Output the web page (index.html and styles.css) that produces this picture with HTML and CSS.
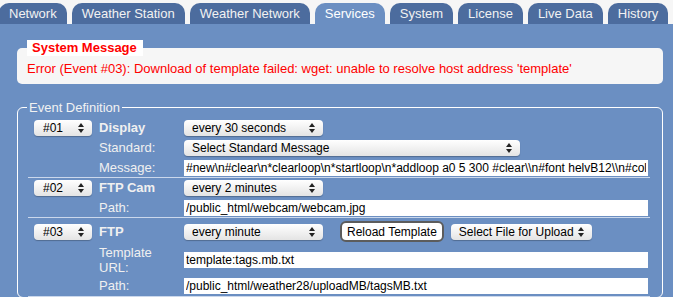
FILE: index.html
```html
<!DOCTYPE html>
<html>
    <head>
        <meta charset="utf-8">
        <link rel="stylesheet" href="styles.css">
    </head>
    <body>
        <ul class="tabs">
            <li>Network</li>
            <li>Weather Station</li>
            <li>Weather Network</li>
            <li class="active">Services</li>
            <li>System</li>
            <li>License</li>
            <li>Live Data</li>
            <li>History</li>
        </ul>

        <div class="panel">
            <fieldset class="sysmsg">
                <legend>System Message</legend>
                <p>Error (Event #03): Download of template failed: wget: unable to resolve host address 'template'</p>
            </fieldset>

            <fieldset class="events">
                <legend>Event Definition</legend>

                <div class="event">
                    <span class="sel num"><select><option>#01</option></select></span>
                    <b class="type">Display</b>
                    <span class="sel interval"><select><option>every 30 seconds</option></select></span>
                    <label>Standard:</label>
                    <span class="sel standard"><select><option>Select Standard Message</option></select></span>
                    <label>Message:</label>
                    <input class="field" value="#new\n#clear\n*clearloop\n*startloop\n*addloop a0 5 300 #clear\\n#font helvB12\\n#color 255 255 255\\n">
                </div>

                <div class="event">
                    <span class="sel num"><select><option>#02</option></select></span>
                    <b class="type">FTP Cam</b>
                    <span class="sel interval"><select><option>every 2 minutes</option></select></span>
                    <label>Path:</label>
                    <input class="field" value="/public_html/webcam/webcam.jpg">
                </div>

                <div class="event last">
                    <span class="sel num"><select><option>#03</option></select></span>
                    <b class="type">FTP</b>
                    <div class="actions">
                        <span class="sel interval"><select><option>every minute</option></select></span>
                        <button>Reload Template</button>
                        <span class="sel upload"><select><option>Select File for Upload</option></select></span>
                    </div>
                    <label class="two-line">Template<br>URL:</label>
                    <input class="field" value="template:tags.mb.txt">
                    <label>Path:</label>
                    <input class="field" value="/public_html/weather28/uploadMB/tagsMB.txt">
                </div>
            </fieldset>
        </div>
    </body>
</html>
```

FILE: styles.css
```css
body, html {
    margin: 0;
    padding: 0;
    height: 100%;
    background-color: #f6f6f6;
    font-family: 'Liberation Sans', Arial, sans-serif;
    overflow: hidden;
}

.tabs {
    display: flex;
    gap: 5px;
    list-style: none;
    margin: 0 0 0 -1px;
    padding: 3px 0 0;
    white-space: nowrap;
}

.tabs li {
    flex-shrink: 0;
    background-color: #4c6c9e;
    color: #f2f2f2;
    font-size: 13px;
    line-height: 21px;
    padding: 0 10px;
    border-radius: 10px 10px 0 0;
}

.tabs li.active {
    background-color: #6b8fc2;
    color: #fff;
}

.panel {
    background-color: #6b8fc2;
    height: 100%;
    padding-top: 16px;
}

fieldset {
    margin: 0 10px 0 17px;
    min-width: 0;
}

.sysmsg {
    border: none;
    background-color: #f6f6f6;
    border-radius: 5px;
    padding: 5px 6px 7px 10px;
}

.sysmsg legend {
    background-color: #fff;
    color: #f00;
    font-weight: bold;
    font-size: 13px;
    line-height: 16px;
    padding: 0 6px 0 5px;
}

.sysmsg p {
    margin: 0;
    color: #f00;
    font-size: 13px;
    line-height: 16px;
}

.events {
    margin-top: 16px;
    border: 1px solid #fff;
    border-radius: 6px;
    padding: 0 12px 0 10px;
}

.events legend {
    color: #f2f2f2;
    font-size: 13px;
    line-height: 15px;
    padding: 0 2px;
    margin-left: -1px;
}

.event {
    display: grid;
    grid-template-columns: 71px 85px 1fr;
    row-gap: 4px;
    align-items: center;
    padding: 5px 0 1px;
    border-bottom: 1px solid #cbd8ec;
    color: #f0f0f0;
    font-size: 13px;
}

.event + .event {
    padding-top: 2px;
}

.event.last {
    padding-top: 3px;
    row-gap: 3px;
    padding-bottom: 2px;
}

.event label {
    grid-column: 2;
    line-height: 16px;
}

.event .two-line {
    line-height: 15px;
}

.type {
    font-weight: bold;
    line-height: 16px;
}

.sel {
    display: inline-block;
    position: relative;
    height: 16px;
}

.sel select {
    appearance: none;
    -webkit-appearance: none;
    width: 100%;
    height: 16px;
    margin: 0;
    border: none;
    border-radius: 4px;
    padding: 0 0 0 8px;
    background: linear-gradient(#ffffff, #e4e4e4);
    box-shadow: 0 1px 1px rgba(0, 0, 0, 0.25);
    font-family: 'Liberation Sans', Arial, sans-serif;
    font-size: 12px;
    color: #000;
    display: block;
}

.sel::before,
.sel::after {
    content: '';
    position: absolute;
    right: 8px;
    border-left: 3px solid transparent;
    border-right: 3px solid transparent;
    pointer-events: none;
}

.sel::before {
    top: 3px;
    border-bottom: 4px solid #222;
}

.sel::after {
    top: 9px;
    border-top: 4px solid #222;
}

.num {
    width: 58px;
    margin-left: 6px;
}

.num select {
    padding-left: 9px;
}

.interval {
    width: 139px;
}

.standard {
    width: 336px;
}

.upload {
    width: 141px;
}

.field {
    width: 464px;
    height: 16px;
    box-sizing: border-box;
    border: none;
    margin: 0;
    padding: 0 2px;
    background: #fff;
    font-family: 'Liberation Sans', Arial, sans-serif;
    font-size: 12px;
    color: #000;
}

.actions {
    display: flex;
    align-items: center;
}

.actions button {
    height: 21px;
    margin: 0 7px 0 17px;
    padding: 0 5px;
    background: #fff;
    border: 2px solid #5c5c5c;
    border-radius: 6px;
    font-family: 'Liberation Sans', Arial, sans-serif;
    font-size: 12px;
    color: #000;
}
```
